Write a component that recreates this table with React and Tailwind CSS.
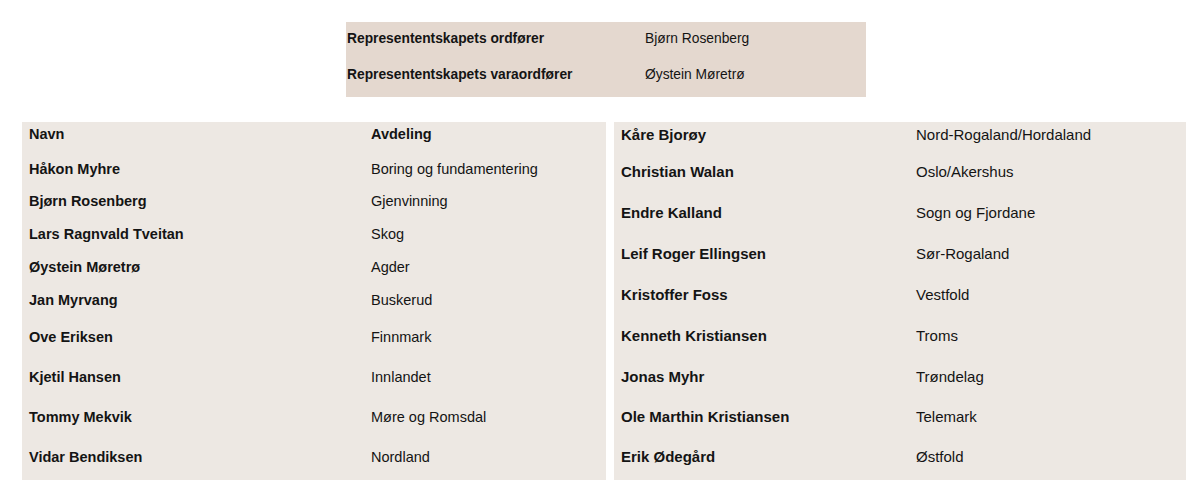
import React from "react";

const left = [
  ["Navn", "Avdeling", "h-[35px]", true],
  ["Håkon Myhre", "Boring og fundamentering", "h-[32px]"],
  ["Bjørn Rosenberg", "Gjenvinning", "h-[33px]"],
  ["Lars Ragnvald Tveitan", "Skog", "h-[33px]"],
  ["Øystein Møretrø", "Agder", "h-[33px]"],
  ["Jan Myrvang", "Buskerud", "h-[37px]"],
  ["Ove Eriksen", "Finnmark", "h-[40px]"],
  ["Kjetil Hansen", "Innlandet", "h-[40px]"],
  ["Tommy Mekvik", "Møre og Romsdal", "h-[40px]"],
  ["Vidar Bendiksen", "Nordland", "h-[31px]"],
];

const right = [
  ["Kåre Bjorøy", "Nord-Rogaland/Hordaland", "h-[37px]"],
  ["Christian Walan", "Oslo/Akershus", "h-[41px]"],
  ["Endre Kalland", "Sogn og Fjordane", "h-[41px]"],
  ["Leif Roger Ellingsen", "Sør-Rogaland", "h-[41px]"],
  ["Kristoffer Foss", "Vestfold", "h-[41px]"],
  ["Kenneth Kristiansen", "Troms", "h-[41px]"],
  ["Jonas Myhr", "Trøndelag", "h-[40px]"],
  ["Ole Marthin Kristiansen", "Telemark", "h-[40px]"],
  ["Erik Ødegård", "Østfold", "h-[31px]"],
];

export default function App() {
  return (
    <div
      className="w-[1200px] h-[504px] bg-white text-[#141414] pl-[22px] pt-[22px]"
      style={{ fontFamily: '"Liberation Sans", Arial, sans-serif' }}
    >
      <div className="ml-[324px] w-[520px] h-[75px] bg-[#e4d8cf] pt-[9px] pl-[1px] text-[13.8px] leading-[16px]">
        <div className="flex h-[36px]">
          <div className="w-[298px] font-bold">Represententskapets ordfører</div>
          <div>Bjørn Rosenberg</div>
        </div>
        <div className="flex">
          <div className="w-[298px] font-bold">Represententskapets varaordfører</div>
          <div>Øystein Møretrø</div>
        </div>
      </div>

      <div className="mt-[25px] flex gap-[8px] leading-[16px]">
        <div className="w-[584px] h-[358px] bg-[#ede8e3] pt-[4px] pl-[7px] text-[14.5px]">
          {left.map(([a, b, h, head]) => (
            <div key={a} className={`flex ${h}`}>
              <div className="w-[342px] font-bold">{a}</div>
              <div className={head ? "font-bold" : ""}>{b}</div>
            </div>
          ))}
        </div>
        <div className="w-[572px] h-[358px] bg-[#ede8e3] pt-[5px] pl-[7px] text-[15px]">
          {right.map(([a, b, h]) => (
            <div key={a} className={`flex ${h}`}>
              <div className="w-[295px] font-bold">{a}</div>
              <div>{b}</div>
            </div>
          ))}
        </div>
      </div>
    </div>
  );
}
